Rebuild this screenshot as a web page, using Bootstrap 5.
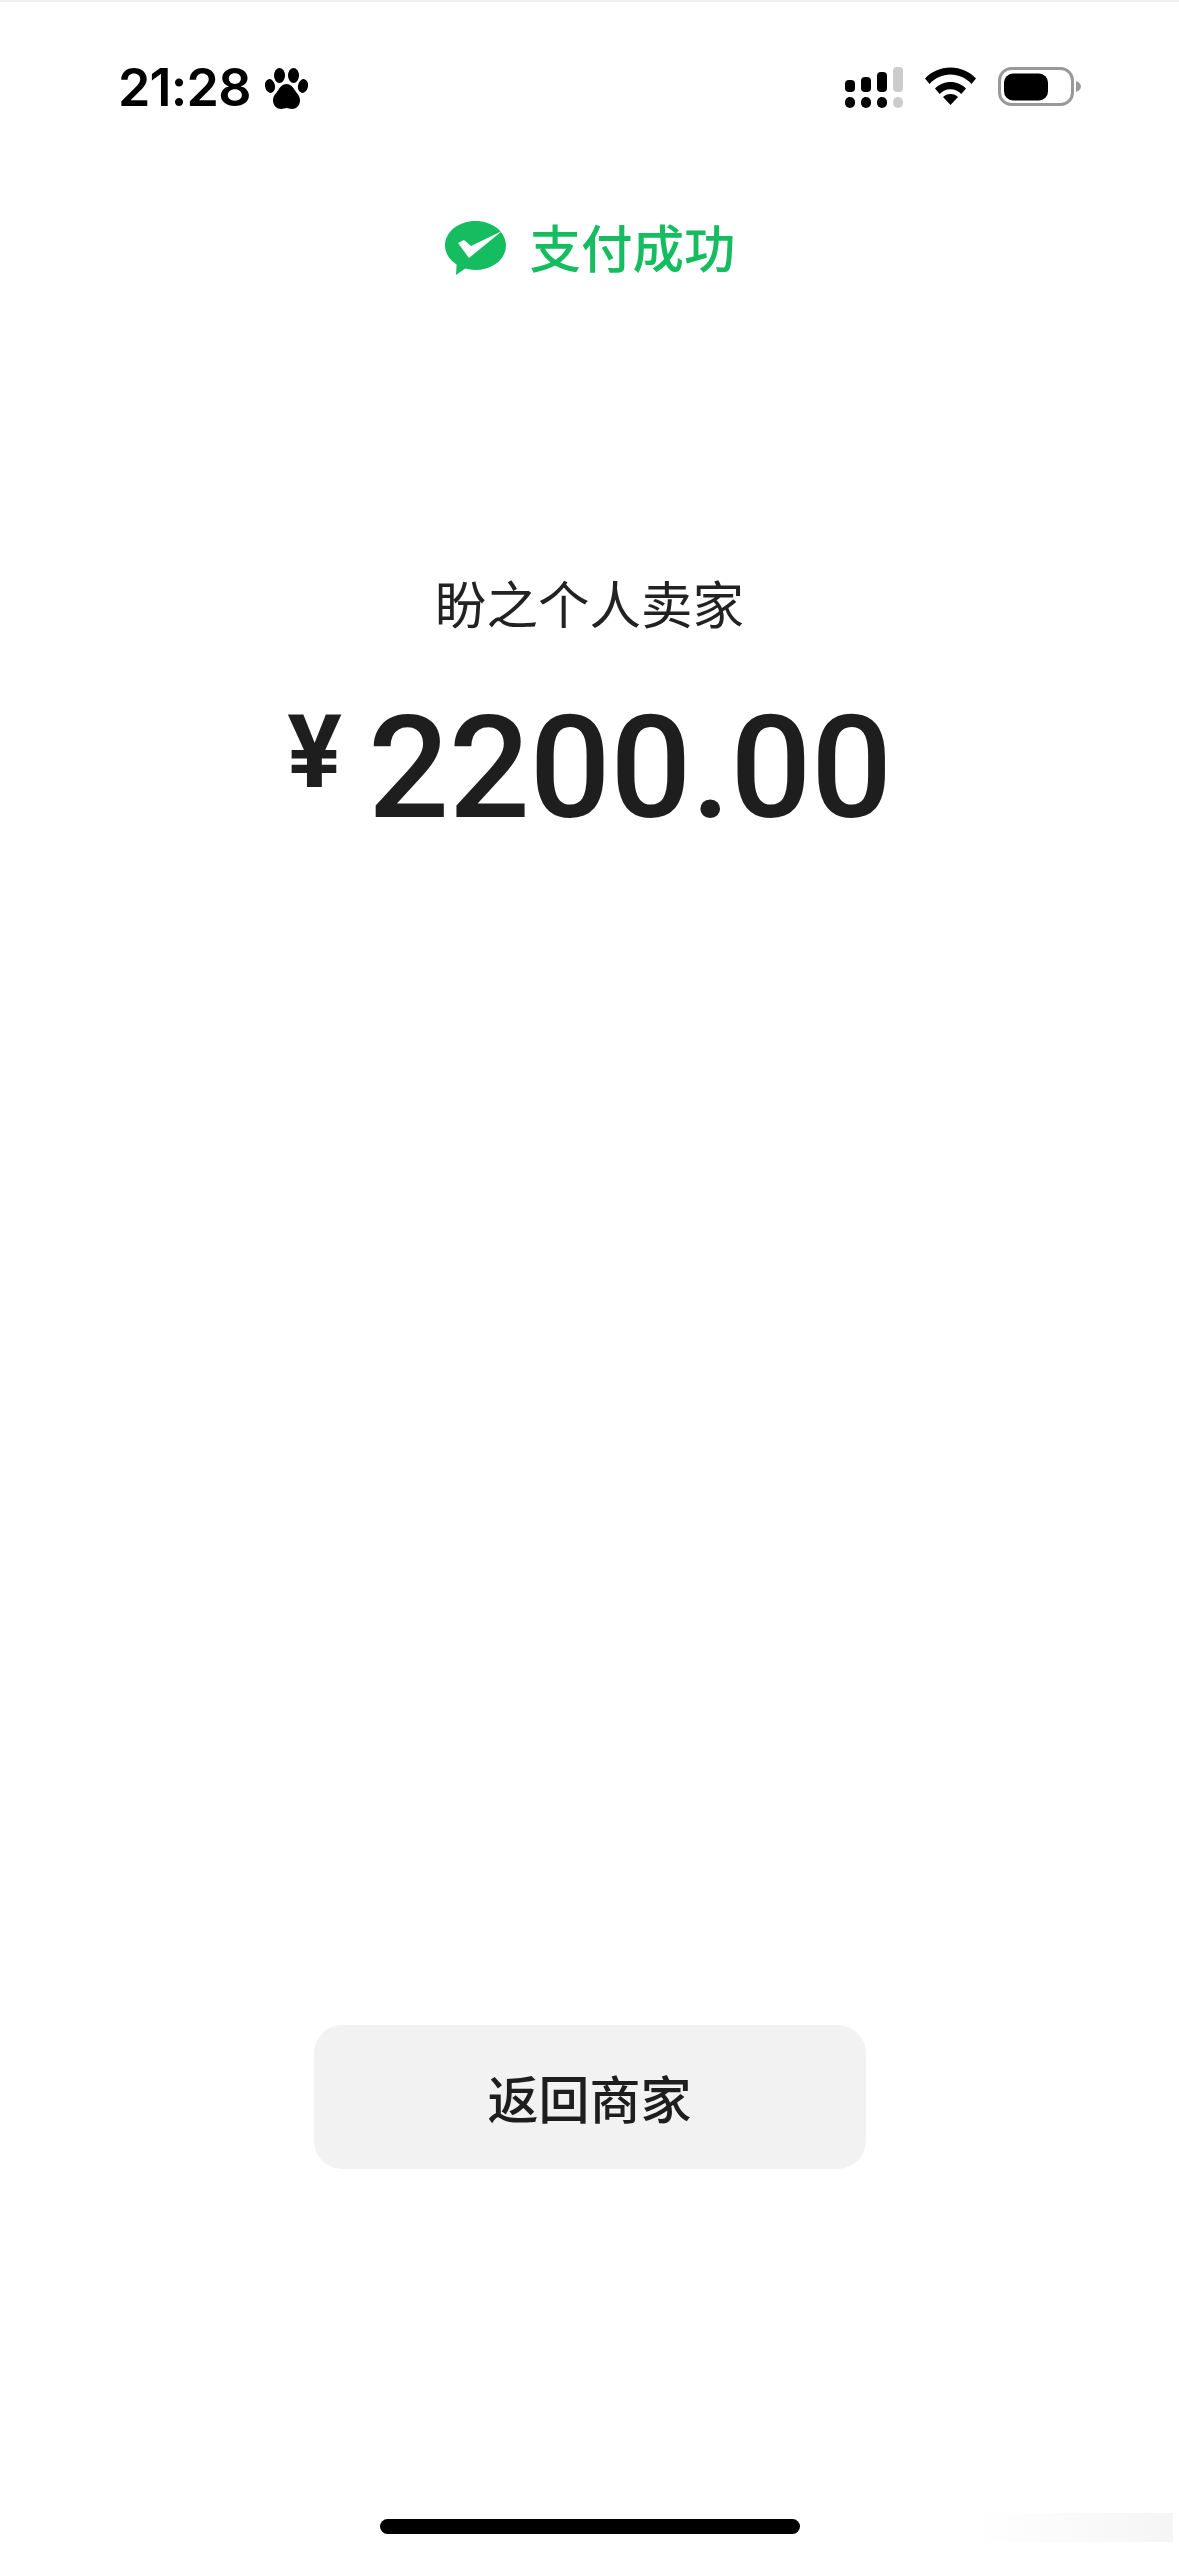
<!DOCTYPE html>
<html lang="zh-CN">
<head>
    <meta charset="UTF-8">
    <meta name="viewport" content="width=device-width, initial-scale=1.0">
    <title>支付成功</title>
    <link href="https://cdn.jsdelivr.net/npm/bootstrap@5.3.0/dist/css/bootstrap.min.css" rel="stylesheet">
    <style>
        body {
            background-color: #fff;
            font-family: "Noto Sans CJK SC", sans-serif;
            color: #222;
        }
        .screen {
            height: 2556px;
            border-top: 2px solid #f0f0f0;
            position: relative;
            overflow: hidden;
        }
        .status-bar {
            height: 86px;
            margin-top: 60px;
            padding: 0 98px 0 118px;
        }
        .clock {
            font-family: Inter, sans-serif;
            font-size: 52px;
            font-weight: 600;
            line-height: 1;
            color: #000;
            letter-spacing: -0.8px;
        }
        .status-left { gap: 14px; }
        .status-right { gap: 22px; margin-top: 5px; }
        .pay-head {
            margin-top: 66px;
            height: 64px;
            gap: 23px;
            padding-left: 2px;
            color: #16bd60;
            font-size: 51.5px;
            font-weight: 500;
            line-height: 1;
        }
        .payee {
            margin-top: 292px;
            font-size: 51.5px;
            font-weight: 400;
            line-height: 64px;
        }
        .amount {
            margin-top: 69px;
            height: 130px;
            gap: 26px;
            color: #1e1e1e;
        }
        .yen {
            font-family: Roboto, sans-serif;
            font-weight: 700;
            font-size: 102px;
            line-height: 1;
            margin-top: -32px;
        }
        .sum {
            font-family: Roboto, sans-serif;
            font-weight: 500;
            font-size: 143px;
            line-height: 130px;
            letter-spacing: -0.5px;
        }
        .back-btn {
            width: 552px;
            height: 144px;
            background: #f2f2f2;
            border: 0;
            border-radius: 28px;
            color: #1e1e1e;
            font-size: 51px;
            font-weight: 500;
            margin-bottom: 387px;
        }
        .back-btn:hover { background: #f2f2f2; color: #1e1e1e; }
        .home-bar {
            position: absolute;
            left: 380px;
            bottom: 22px;
            width: 420px;
            height: 15px;
            border-radius: 8px;
            background: #000;
        }
        .smudge {
            position: absolute;
            right: 6px;
            bottom: 14px;
            width: 200px;
            height: 29px;
            background: linear-gradient(90deg, rgba(0,0,0,0), rgba(0,0,0,.04));
        }
    </style>
</head>
<body>
    <div class="screen d-flex flex-column">

        <div class="status-bar d-flex justify-content-between align-items-start">
            <div class="status-left d-flex align-items-center">
                <span class="clock">21:28</span>
                <svg width="43" height="43" viewBox="0 0 43 43" fill="#000">
                    <ellipse cx="14.5" cy="8.5" rx="5.5" ry="7.5"/>
                    <ellipse cx="28.5" cy="8.5" rx="5.5" ry="7.5"/>
                    <ellipse cx="5" cy="19" rx="5" ry="7" transform="rotate(-12 5 19)"/>
                    <ellipse cx="38" cy="19" rx="5" ry="7" transform="rotate(12 38 19)"/>
                    <path d="M21.5 17c4 0 6.500 3 8.500 6.500 2 3 5 5 5 10 0 5-4 8.500-8 8.500-2.500 0-3.500-1-5.500-1s-3 1-5.500 1c-4 0-8-3.500-8-8.500 0-5 3-7 5-10C15 20 17.500 17 21.500 17z"/>
                </svg>
            </div>
            <div class="status-right d-flex align-items-start">
                <svg width="58" height="41" viewBox="0 0 58 41" fill="#000">
                    <rect x="0" y="13" width="10" height="12" rx="4"/>
                    <rect x="16" y="10" width="10" height="15" rx="4"/>
                    <rect x="32" y="5" width="10" height="20" rx="4"/>
                    <rect x="48" y="0" width="10" height="25" rx="4" fill="#ccc"/>
                    <rect x="0" y="30" width="10" height="11" rx="5"/>
                    <rect x="16" y="30" width="10" height="11" rx="5"/>
                    <rect x="32" y="30" width="10" height="11" rx="5"/>
                    <rect x="48" y="30" width="10" height="11" rx="5" fill="#ccc"/>
                </svg>
                <svg width="51" height="38" viewBox="0 0 51 38" fill="#000">
                    <path d="M0 11.500C6.500 4.500 15.500 0.500 25.500 0.500S44.500 4.500 51 11.500l-4.500 5.500C41 11 33.500 7.500 25.500 7.500S10 11 4.500 17z"/>
                    <path d="M10 21.500c4-4 9.500-6.500 15.500-6.500s11.500 2.500 15.500 6.500l-4.700 5.500c-3-3-6.500-4.800-10.800-4.800s-7.800 1.800-10.800 4.800z"/>
                    <path d="M18 30c2-2 4.500-3 7.500-3s5.500 1 7.500 3l-7.500 8z"/>
                </svg>
                <svg width="83" height="40" viewBox="0 0 83 40">
                    <rect x="1.500" y="1.500" width="73" height="36" rx="12" fill="none" stroke="#999" stroke-width="3"/>
                    <rect x="6" y="6.500" width="44" height="27" rx="9" fill="#000"/>
                    <path d="M78 14c3 1 5 3 5 5.500s-2 4.500-5 5.500z" fill="#999"/>
                </svg>
            </div>
        </div>

        <div class="pay-head d-flex justify-content-center align-items-center">
            <svg class="mt-1" width="61" height="54" viewBox="0 0 61 54">
                <path d="M30.500 0C47.300 0 61 10.800 61 24.500S47.300 49 30.500 49c-3.600 0-7-.5-10.200-1.400L11 54l.6-10.500C4.500 39 0 32.200 0 24.500 0 10.800 13.700 0 30.500 0z" fill="#16bd60"/>
                <path d="M13 22l6-3 7 6L57 10 24 37z" fill="#fff"/>
            </svg>
            <span>支付成功</span>
        </div>

        <div class="payee text-center">盼之个人卖家</div>

        <div class="amount d-flex justify-content-center align-items-center">
            <span class="yen">¥</span>
            <span class="sum">2200.00</span>
        </div>

        <div class="flex-grow-1 d-flex justify-content-center align-items-end">
            <button type="button" class="btn back-btn">返回商家</button>
        </div>

        <div class="smudge"></div>
        <div class="home-bar"></div>
    </div>

    <script src="https://cdn.jsdelivr.net/npm/bootstrap@5.3.0/dist/js/bootstrap.bundle.min.js"></script>
</body>
</html>
